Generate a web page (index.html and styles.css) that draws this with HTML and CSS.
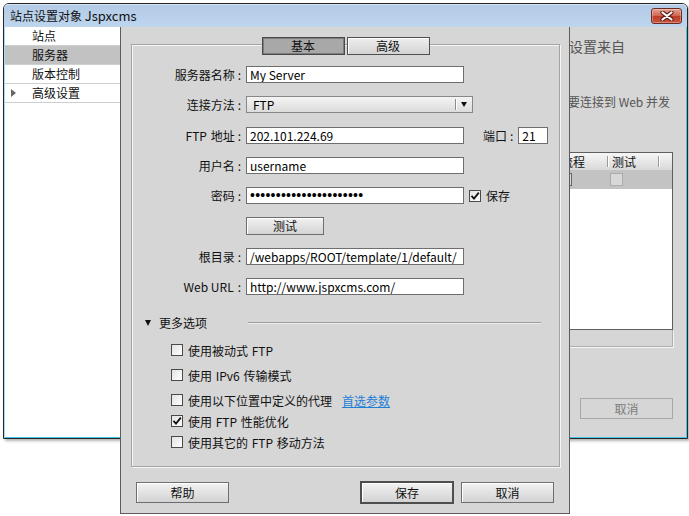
FILE: index.html
```html
<!DOCTYPE html>
<html lang="zh-CN">
<head>
<meta charset="utf-8">
<title>站点设置对象 Jspxcms</title>
<link rel="stylesheet" href="styles.css">
</head>
<body>
<div class="window">
  <div class="titlebar">
    <span class="title">站点设置对象 <span class="title-en">Jspxcms</span></span>
    <span class="close"><svg width="14" height="10" viewBox="0 0 14 10"><path d="M2.5 1.5 L11.5 8.5 M11.5 1.5 L2.5 8.5" stroke="#5a1d14" stroke-width="4.2" stroke-linecap="round"/><path d="M2.5 1.5 L11.5 8.5 M11.5 1.5 L2.5 8.5" stroke="#fff" stroke-width="2.2" stroke-linecap="round"/></svg></span>
  </div>
  <div class="winbody">
    <ul class="side">
      <li>站点</li>
      <li class="sel">服务器</li>
      <li>版本控制</li>
      <li class="group">高级设置</li>
    </ul>
    <div class="main">
      <p class="lead">此对话框的设置来自</p>
      <p class="note">如果要连接到 Web 并发</p>
      <div class="table">
        <div class="thead">
          <div class="c1">流程</div>
          <div class="c2 sep">测试</div>
          <div class="c3 sep"></div>
        </div>
        <div class="trow">
          <div class="c1"><span class="minibox dark"></span></div>
          <div class="c2"><span class="minibox"></span></div>
        </div>
        <div class="tbody"></div>
      </div>
      <div class="hscroll"></div>
      <div class="ghost">取消</div>
    </div>
  </div>
</div>

<div class="dialog">
  <div class="panel">
    <div class="tabs"><span class="tab on">基本</span><span class="tab">高级</span></div>
    <div class="form">
      <span class="lbl">服务器名称<i>:</i></span>
      <div class="field">My Server</div>

      <span class="lbl">连接方法<i>:</i></span>
      <div class="select"><span>FTP</span><b class="arrow"></b></div>

      <span class="lbl"><span class="en">FTP</span> 地址<i>:</i></span>
      <div class="cell"><div class="field">202.101.224.69</div><span class="port-lbl">端口<i>:</i></span><div class="field port">21</div></div>

      <span class="lbl">用户名<i>:</i></span>
      <div class="field">username</div>

      <span class="lbl">密码<i>:</i></span>
      <div class="cell"><div class="field pw">••••••••••••••••••••••</div><span class="check on"><svg width="10" height="10" viewBox="0 0 10 10"><path d="M1.5 4.8 L4 7.6 L8.8 1.6" fill="none" stroke="#111" stroke-width="1.8"/></svg></span><span class="after">保存</span></div>

      <span></span>
      <div><button class="btn test">测试</button></div>

      <span class="lbl">根目录<i>:</i></span>
      <div class="field">/webapps/ROOT/template/1/default/</div>

      <span class="lbl"><span class="en">Web URL</span><i>:</i></span>
      <div class="field">http://www.jspxcms.com/</div>
    </div>

    <div class="more"><b class="tri"></b><span>更多选项</span><span class="rule"></span></div>

    <ul class="opts">
      <li><span class="check"></span>使用被动式 <span class="en">FTP</span></li>
      <li><span class="check"></span>使用 <span class="en">IPv6</span> 传输模式</li>
      <li><span class="check"></span>使用以下位置中定义的代理<a class="link">首选参数</a></li>
      <li class="tight"><span class="check on"><svg width="10" height="10" viewBox="0 0 10 10"><path d="M1.5 4.8 L4 7.6 L8.8 1.6" fill="none" stroke="#111" stroke-width="1.8"/></svg></span>使用 <span class="en">FTP</span> 性能优化</li>
      <li class="tight"><span class="check"></span>使用其它的 <span class="en">FTP</span> 移动方法</li>
    </ul>
  </div>
  <div class="actions">
    <button class="btn">帮助</button>
    <button class="btn primary">保存</button>
    <button class="btn">取消</button>
  </div>
</div>
</body>
</html>
```

FILE: styles.css
```css
* { box-sizing: border-box; margin: 0; padding: 0; }
html, body { width: 689px; height: 516px; }
body {
  position: relative;
  overflow: hidden;
  background: #fff;
  font: 12px/17px "Noto Sans CJK SC", "Liberation Sans", sans-serif;
  color: #111;
}
ul { list-style: none; }
button { font: inherit; color: inherit; cursor: default; }

/* background window */
.window {
  position: absolute;
  left: 3px; top: 3px;
  width: 685px; height: 436px;
  display: flex; flex-direction: column;
  border: 1px solid #262626;
  border-radius: 6px 6px 0 0;
  background: #b9d1ea;
  box-shadow: 2px 2px 3px rgba(0,0,0,.3);
}
.titlebar {
  height: 23px; flex: none;
  display: flex; align-items: center; justify-content: space-between;
  padding: 0 5px 0 6px;
  border-radius: 5px 5px 0 0;
  background: linear-gradient(#b3cbe6, #bed5ee);
  box-shadow: inset 0 1px 0 #d6e5f5;
}
.title { font-size: 12px; line-height: 17px; color: #111; }
.title-en { font-size: 13px; }
.close {
  width: 31px; height: 16px; margin-top: 1px;
  display: flex; align-items: center; justify-content: center;
  border: 1px solid #6b2b22; border-radius: 3px;
  background: linear-gradient(#e6a193, #d26552 48%, #bd3d28 52%, #c9553f);
  box-shadow: inset 0 0 0 1px rgba(255,255,255,.3);
}
.winbody {
  flex: 1; display: flex;
  border: 1px solid #45c5ea; border-top: 0; border-left-color: #a9dbf0;
  background: #d6d6d6;
}
.side { width: 115px; flex: none; background: #fff; }
.side li {
  position: relative;
  height: 19px; line-height: 18px;
  padding-left: 27px;
  border-bottom: 1px solid #cfcfcf;
}
.side li.sel { background: #c2c2c2; }
.side li.group::before {
  content: ""; position: absolute; left: 6px; top: 5px;
  border-left: 5px solid #666;
  border-top: 4px solid transparent; border-bottom: 4px solid transparent;
}
.main {
  flex: 1; min-width: 0;
  display: flex; flex-direction: column; align-items: flex-start;
  color: #555;
}
.lead { margin: 9px 0 0 379px; font-size: 14px; line-height: 20px; white-space: nowrap; }
.note { margin: 37px 0 0 424px; white-space: nowrap; }
.table {
  margin: 42px 0 0 320px;
  width: 233px;
  border: 1px solid #5f5f5f;
  background: #fff;
}
.thead {
  height: 17px; display: flex;
  background: linear-gradient(#f6f6f6, #d8d8d8);
  color: #111;
}
.thead .c1 { padding-left: 120px; }
.c1 { width: 166px; flex: none; }
.c2 { width: 51px; flex: none; padding-left: 5px; }
.c3 { flex: 1; }
.sep { position: relative; }
.sep::before {
  content: ""; position: absolute; left: 0; top: 3px; height: 11px;
  border-left: 1px solid #9a9a9a; border-right: 1px solid #fff;
}
.trow { height: 19px; display: flex; align-items: center; background: #c3c3c3; }
.trow .c1 { display: flex; padding-left: 119px; }
.trow .c2 { display: flex; padding-left: 3px; }
.minibox {
  width: 13px; height: 13px;
  border: 1px solid #acacac; background: #d8d8d8;
}
.minibox.dark { width: 12px; border-color: #666; }
.tbody { height: 140px; }
.hscroll {
  margin-left: 320px; width: 233px; height: 17px;
  border-right: 1px solid #b0b0b0; border-bottom: 1px solid #b0b0b0;
  box-shadow: 1px 1px 0 #f4f4f4;
}
.ghost {
  margin: 51px 0 0 460px;
  width: 93px; height: 21px;
  border: 1px solid #a8a8a8;
  line-height: 19px; text-align: center;
  color: #7b7b7b;
}

/* dialog */
.dialog {
  position: absolute; left: 120px; top: 27px; z-index: 2;
  width: 450px; height: 487px;
  padding: 17px 9px 0 10px;
  background: #d6d6d6;
  border: 1px solid #5c5c5c; border-top: 0;
}
.panel {
  height: 423px;
  border: 1px solid #a3a3a3;
  box-shadow: inset 1px 1px 0 #f6f6f6, 1px 1px 0 #f6f6f6;
}
.tabs { display: flex; justify-content: center; gap: 2px; margin-top: -8px; }
.tab {
  width: 83px; height: 18px; line-height: 16px; text-align: center;
  border: 1px solid #505050;
  background: linear-gradient(#eeeeee, #d4d4d4);
  box-shadow: inset 1px 1px 0 #fff;
}
.tab.on {
  background: #a8a8a8;
  border-color: #4a4a4a;
  box-shadow: inset 0 0 0 1px #7c7c7c;
}
.form {
  display: grid;
  grid-template-columns: 109px auto;
  grid-auto-rows: 17px;
  column-gap: 5px; row-gap: 13.3px;
  margin-top: 11px;
  align-items: center; justify-items: start;
}
.lbl { justify-self: end; white-space: nowrap; color: #111; }
.lbl i, .port-lbl i { font-style: normal; margin-left: 3px; }
.en { margin: 0 1px; }
.field {
  width: 218px; height: 17px;
  padding: 0 3px;
  border: 1px solid #6e6e6e;
  background: #fff;
  line-height: 15px; color: #000;
  white-space: nowrap; overflow: hidden;
}
.field.port { width: 30px; margin-left: 5px; }
.field.pw {
  font-family: "Liberation Sans", sans-serif;
  font-size: 14px; line-height: 15px;
  letter-spacing: 0.25px;
  padding-left: 3px;
}
.cell { display: flex; align-items: center; }
.port-lbl { margin-left: 19px; }
.select {
  width: 227px; height: 17px;
  display: flex; align-items: center;
  padding-left: 6px;
  border: 1px solid #888;
  background: linear-gradient(#f4f4f4, #dcdcdc);
  line-height: 15px; color: #000;
}
.arrow {
  margin-left: auto;
  width: 17px; height: 11px;
  display: flex; align-items: center; justify-content: center;
  border-left: 1px solid #8c8c8c;
  box-shadow: inset 1px 0 0 #fff;
}
.arrow::after {
  content: "";
  border-top: 5px solid #111;
  border-left: 3.5px solid transparent; border-right: 3.5px solid transparent;
}
.check {
  width: 12px; height: 12px; flex: none;
  display: inline-flex; align-items: center; justify-content: center;
  border: 1px solid #4a4a4a;
  background: linear-gradient(135deg, #e2e2e2, #ffffff);
}
.cell .check { margin-left: 5px; }
.after { margin-left: 5px; }
.btn {
  width: 93px; height: 21px; padding: 0;
  border: 1px solid #6e6e6e;
  background: linear-gradient(#f2f2f2, #d3d3d3);
  box-shadow: inset 1px 1px 0 #fff;
  text-align: center; line-height: 19px;
}
.btn.test { width: 78px; height: 18px; line-height: 16px; }
.more {
  display: flex; align-items: center;
  height: 17px; margin-top: 19px; padding-left: 13px;
}
.tri {
  border-top: 6px solid #111;
  border-left: 3.5px solid transparent; border-right: 3.5px solid transparent;
  margin-right: 8px;
}
.rule {
  flex: 1; height: 1px;
  margin: 0 18px 0 41px;
  background: #9d9d9d;
  box-shadow: 0 1px 0 #ececec;
}
.opts { margin-top: 10.5px; padding-left: 39px; }
.opts li { display: flex; align-items: center; height: 17px; margin-top: 8px; white-space: pre; }
.opts li:first-child { margin-top: 0; }
.opts li.tight { margin-top: 4px; }
.opts .check { margin-right: 5px; }
.link { margin-left: 10px; color: #1f7fd6; text-decoration: underline; }
.actions {
  display: flex; align-items: center;
  height: 23px; margin-top: 14px;
  padding: 0 6px 0 5px;
}
.btn.primary {
  margin-left: auto; margin-right: 7px;
  width: 94px; height: 23px;
  border: 2px solid #4e4e4e;
}
```
